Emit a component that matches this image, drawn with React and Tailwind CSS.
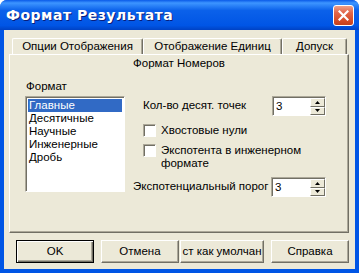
function SpinBox({ value, width }) {
  return (
    <div
      className={`${width} h-[20px] flex bg-white border border-t-[#ACA899] border-l-[#ACA899] border-r-white border-b-white shadow-[inset_1px_1px_0_#716F64]`}
    >
      <div className="flex-1 pl-[3px] pt-[1px] leading-[17px]">{value}</div>
      <div className="w-[15px] flex flex-col pt-[1px]">
        <div className="flex-1 flex items-center justify-center bg-[#ECE9D8] border border-t-white border-l-white border-r-[#716F64] border-b-[#716F64]">
          <svg width="5" height="3" viewBox="0 0 5 3">
            <path d="M2.5 0 L5 3 L0 3 Z" fill="#000" />
          </svg>
        </div>
        <div className="flex-1 flex items-center justify-center bg-[#ECE9D8] border border-t-white border-l-white border-r-[#716F64] border-b-[#716F64]">
          <svg width="5" height="3" viewBox="0 0 5 3">
            <path d="M0 0 L5 0 L2.5 3 Z" fill="#000" />
          </svg>
        </div>
      </div>
    </div>
  );
}

function CheckBox() {
  return (
    <div className="w-[13px] h-[13px] shrink-0 bg-white border border-t-[#ACA899] border-l-[#ACA899] border-r-white border-b-white shadow-[inset_1px_1px_0_#716F64]" />
  );
}

function Button({ children, isDefault, width }) {
  const base = `${width} h-[23px] flex items-center justify-center bg-[#ECE9D8] overflow-hidden whitespace-nowrap`;
  if (isDefault) {
    return (
      <div
        className={`${base} border border-black shadow-[inset_1px_1px_0_#fff,inset_-1px_-1px_0_#716F64,inset_-2px_-2px_0_#ACA899]`}
      >
        {children}
      </div>
    );
  }
  return (
    <div
      className={`${base} border border-t-white border-l-white border-r-[#716F64] border-b-[#716F64] shadow-[inset_-1px_-1px_0_#ACA899]`}
    >
      {children}
    </div>
  );
}

export default function App() {
  const items = ["Главные", "Десятичные", "Научные", "Инженерные", "Дробь"];

  return (
    <div className="w-[359px] h-[273px] flex flex-col bg-[#0055E5] rounded-t-[7px] overflow-hidden font-['Liberation_Sans',sans-serif] text-[11.5px] text-black">
      {/* title bar */}
      <div className="h-[30px] shrink-0 flex items-center justify-between pl-[6px] pr-[5px] bg-[linear-gradient(180deg,#0a5ae8_0%,#3d95ff_10%,#0b61ea_35%,#0055e5_85%,#0042c4_100%)]">
        <span className="text-white font-bold text-[14px] tracking-[0.5px] font-['DejaVu_Sans',sans-serif] [text-shadow:1px_1px_0_#0a1e7a]">
          Формат Результата
        </span>
        <div className="w-[21px] h-[21px] rounded-[3px] border border-white flex items-center justify-center bg-[linear-gradient(180deg,#eda088_0%,#e2664a_35%,#d34a24_80%,#c2401c_100%)]">
          <svg width="11" height="11" viewBox="0 0 11 11">
            <path d="M1.5 1.5 L9.5 9.5 M9.5 1.5 L1.5 9.5" stroke="#fff" strokeWidth="2.2" strokeLinecap="square" />
          </svg>
        </div>
      </div>

      {/* client area */}
      <div className="flex-1 mx-[4px] mb-[4px] bg-[#ECE9D8] flex flex-col">
        {/* back row of tabs */}
        <div className="mt-[8px] ml-[8px] flex h-[16px]">
          <div className="w-[131px] flex items-center justify-center rounded-t-[2px] border-t border-l border-white border-r border-r-[#716F64] shadow-[inset_-1px_0_0_#ACA899]">
            Опции Отображения
          </div>
          <div className="w-[139px] flex items-center justify-center rounded-t-[2px] border-t border-l border-white border-r border-r-[#716F64] shadow-[inset_-1px_0_0_#ACA899]">
            Отображение Единиц
          </div>
          <div className="w-[65px] flex items-center justify-center rounded-t-[2px] border-t border-l border-white border-r border-r-[#716F64] shadow-[inset_-1px_0_0_#ACA899]">
            Допуск
          </div>
        </div>

        {/* selected tab + panel */}
        <div className="ml-[5px] w-[340px] h-[179px] flex flex-col border border-t-white border-l-white border-r-[#716F64] border-b-[#716F64] shadow-[inset_-1px_-1px_0_#ACA899]">
          <div className="h-[17px] leading-[17px] text-center">Формат Номеров</div>

          <div className="flex">
            {/* format list */}
            <div className="pl-[15px] pt-[8px] w-[100px] box-content">
              <div className="leading-[13px] mb-[3px] pl-[1px]">Формат</div>
              <div className="w-[100px] h-[96px] bg-white border border-t-[#ACA899] border-l-[#ACA899] border-r-white border-b-white shadow-[inset_1px_1px_0_#716F64] pt-[2px] px-[2px]">
                {items.map((item, i) => (
                  <div
                    key={item}
                    className={`h-[13px] leading-[13px] pl-[1px] ${i === 0 ? "bg-[#316AC5] text-white" : ""}`}
                  >
                    {item}
                  </div>
                ))}
              </div>
            </div>

            {/* options */}
            <div className="ml-[8px] w-[193px] flex flex-col">
              <div className="mt-[24px] h-[20px] pl-[10px] flex items-center justify-between">
                <span>Кол-во десят. точек</span>
                <SpinBox value="3" width="w-[54px]" />
              </div>
              <div className="mt-[8px] h-[13px] pl-[10px] flex items-center">
                <CheckBox />
                <span className="ml-[5px] leading-[13px]">Хвостовые нули</span>
              </div>
              <div className="mt-[7px] pl-[10px] flex items-start">
                <CheckBox />
                <span className="ml-[5px] leading-[13px]">
                  Экспотента в инженерном
                  <br />
                  формате
                </span>
              </div>
              <div className="mt-[7px] h-[20px] flex items-center justify-between whitespace-nowrap">
                <span>Экспотенциальный порог</span>
                <SpinBox value="3" width="w-[55px]" />
              </div>
            </div>
          </div>
        </div>

        {/* buttons */}
        <div className="mt-[7px] ml-[12px] flex">
          <Button isDefault width="w-[78px]">OK</Button>
          <div className="ml-[7px]">
            <Button width="w-[78px]">Отмена</Button>
          </div>
          <div className="ml-[1px]">
            <Button width="w-[84px]">ст как умолчан</Button>
          </div>
          <div className="ml-[7px]">
            <Button width="w-[78px]">Справка</Button>
          </div>
        </div>
      </div>
    </div>
  );
}
